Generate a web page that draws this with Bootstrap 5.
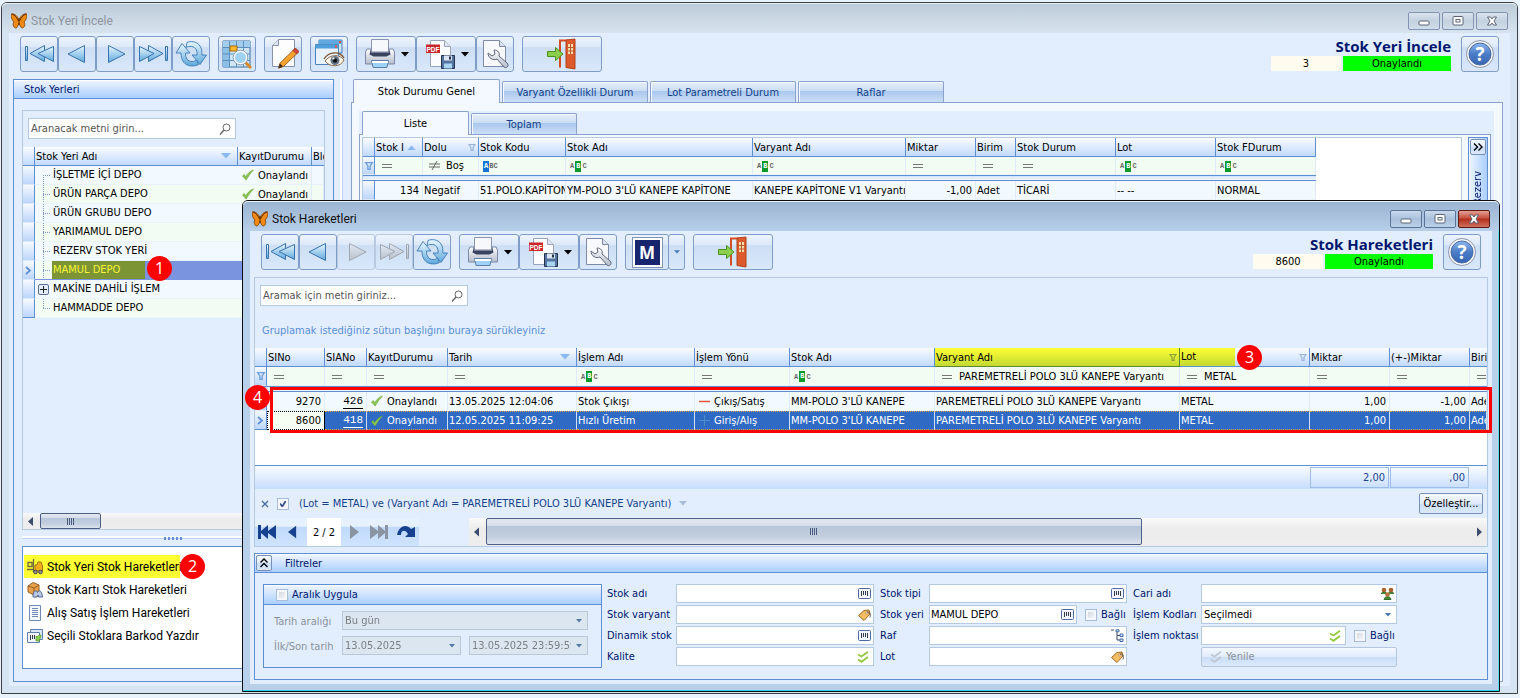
<!DOCTYPE html>
<html lang="tr">
<head>
<meta charset="utf-8">
<meta name="viewport" content="width=device-width, initial-scale=1">
<title>Stok Yeri İncele</title>
<link href="https://cdn.jsdelivr.net/npm/bootstrap@5.3.0/dist/css/bootstrap.min.css" rel="stylesheet">
<style>
:root{--line:#5f8fd2;--soft:#b4c9e3;--face:#e2eefe;--navy:#00156e}
html,body{height:100%}
body{background:#e9f3fd;font:11px/18px "DejaVu Sans Condensed","DejaVu Sans",sans-serif;color:#000;overflow:hidden}
button,input,select{font:inherit;color:inherit}
svg{display:block;flex:none}
.seg{font-family:Roboto,"Noto Sans",sans-serif;font-size:12px}
/* windows */
.win{position:absolute;display:flex;flex-direction:column;border:1px solid #3c4044;border-radius:6px 6px 0 0}
.win-main{inset:2px 2px 4px 1px;background:#d6e4f1}
.win-main>.win-title{background:linear-gradient(#bccad7,#d7e4f0);color:#8f959c}
.win-dlg{inset:200px 20px 6px 242px;border-color:#0b0d10;background:#b8d0e9;box-shadow:inset 0 -1px #28d3e6,inset -1px 0 #5fdcee}
.win-dlg>.win-title{background:linear-gradient(#9ab3d1,#b7cfe8);color:#111}
.win-title{height:30px;padding:7px 9px 0 9px;border-radius:5px 5px 0 0;box-shadow:inset 0 1px #e8f0f8}
.win-title .cap{line-height:23px;padding-left:4px}
.win-title>svg{margin-top:3px}
.win-body{flex:1;min-height:0;display:flex;flex-direction:column;background:var(--face);margin:0 7px 7px}
.winbtn{width:32px;height:18px;border:1px solid #8493b0;border-radius:2px;background:linear-gradient(#dbe4ef,#c3d0de 50%,#cfdcea);padding:0;display:flex;align-items:center;justify-content:center;margin-top:2px}
.win-dlg .winbtn{border-color:#5a7498;background:linear-gradient(#c9d9ec,#a9c0dd 50%,#bcd0e8)}
.win-dlg .winbtn.shut{border-color:#5c1a16;background:linear-gradient(#e3a095,#c8503e 45%,#b22f1c 50%,#d0705c)}
/* toolbar */
.bar{height:46px;padding:3px 11px 0 11px;align-items:flex-start}
.win-dlg .bar{padding:3px 7px 0 7px}
.bar-btn{width:38px;height:36px;padding:0;border:1px solid #7f9cc8;border-radius:3px;display:flex;align-items:center;justify-content:center;background:linear-gradient(#edf4fd,#dce8f8 30%,#cddef4 31%,#d9e8fb)}
.bar-btn.wide{width:60px;justify-content:space-around;padding:0 4px 0 5px}
.bar-btn.exit{width:80px}
.bar-btn.q{margin-left:2px}
.bar-btn:disabled{border-color:#b9c9e0}
.bar-btn:disabled svg{filter:grayscale(1) opacity(.5)}
.screen-name{font:bold 15px/20px "Open Sans","Noto Sans",sans-serif;color:var(--navy);text-align:right}
.tagbox{height:15px;line-height:16px;text-align:center}
.tagbox.id{width:70px;background:#fffbef}
.tagbox.ok{width:108px;background:#0f0}
/* boxes */
.pane{border:1px solid var(--line);display:flex;flex-direction:column}
.pane-head{background:linear-gradient(#f0f6ff,#dceaff 30%,#aacfff);border-bottom:1px solid var(--line);color:var(--navy);height:19px;line-height:19px;box-shadow:inset 0 1px #fff}
.soft{border:1px solid var(--soft)}
.find{width:208px;height:21px;background:#fff;border:1px solid var(--soft);display:flex;align-items:center;padding:0 4px 0 2px;margin:7px 0 0 5px}
.find input,.fld input{flex:1;min-width:0;border:0;outline:0;background:none;padding:0}
.find input::placeholder{color:#555;opacity:1}
/* grids */
.xgrid.table{table-layout:fixed;border-collapse:separate;border-spacing:0;color:#000;margin:0}
.xgrid.table th,.xgrid.table td{height:19px;padding:0 2px 0 1px;line-height:17px;white-space:nowrap;overflow:hidden;font-weight:400;vertical-align:middle;box-shadow:none}
.xgrid.table th{background:linear-gradient(#fafcff,#e6f0ff 35%,#c2dafd);border-bottom:1px solid var(--line);border-right:1px solid var(--line)}
.xgrid.table td{background:#f2faff;border-right:1px solid #dfebfa;border-bottom:1px solid #e9f3fb}
.xgrid.table tr.alt td,.xgrid.table tr.filt td{background:#f3fcf2}
.win-main .xgrid.table tr.filt td{height:18px}
.xgrid.table tbody tr td.ind{background:linear-gradient(#f6faff,#bcd6fb);border-right:1px solid var(--line);border-bottom-color:#dce9fa;padding:0}
.xgrid.table tr.band td{height:6px;line-height:0;background:linear-gradient(#d5e5fb,#f0f6ff);border:solid var(--line);border-width:1px 0;padding:0}
.xgrid.table .num{text-align:right;padding-right:3px}
.xgrid.table .last-ind td.ind{border-bottom-color:var(--line)}
.stat{display:flex;align-items:center;gap:4px;padding-left:3px}
.eq{display:inline-block;width:10px;height:4px;border:solid #777;border-width:1px 0;margin-left:6px;vertical-align:middle}
.abc{display:inline-flex;align-items:center;height:11px;font:bold 7px/10px "Liberation Mono",monospace;color:#666;margin-left:3px;vertical-align:middle}
.abc b{background:#0a9a2c;color:#fff;padding:0 1px;height:11px;line-height:11px;margin:0 1px}
.abc.first b{background:#1173d4;margin:0}
.hl{background:linear-gradient(#feff35,#c3d931)!important;border-color:#5c8a2a!important}
.branch{width:9px;height:18px;margin-left:8px;flex:none;background:repeating-linear-gradient(#8099c4 0 1px,transparent 1px 2px) 0 0/1px 100% no-repeat,repeating-linear-gradient(90deg,#8099c4 0 1px,transparent 1px 2px) 0 9px/8px 1px no-repeat}
.branch.first{background-position:0 9px,0 9px}
.branch.end{background-size:1px 10px,8px 1px}
.plus{width:11px;height:11px;border:1px solid #5c6f93;border-radius:2px;background:#e3ecf8;padding:0;margin:0 3px 0 3px;display:flex;align-items:center;justify-content:center}
.xgrid.table .tree{padding:0;border-right:0}
.tree>div{height:18px;line-height:18px}
.tree span{padding-left:1px}
.xgrid.table tr.cur .tree,.xgrid.table tr.cur td.st{border-bottom-color:#7b94df}
.xgrid.table tr.cur td.st{background:#7b94df}
tr.cur .nm{background:#7b94df;flex:1;display:flex}
.mark-cur{background:#7c9433;color:#f4f53a;width:93px}
.xgrid.table tr.sel td{background:#2f6ac5;color:#fff;border-right-color:#cfe0f6;border-bottom:1px dotted #e0a33c;border-top:1px dotted #e0a33c;line-height:16px}
.xgrid.table tr.sel td.foc{background:#f6fdf2;color:#000;border-color:#000;border-left:1px dotted #000}
.xgrid.table tr.sel td.ind{border-top:0;border-bottom:1px solid var(--line)}
.idlink{font:11px/13px "Liberation Mono",monospace;text-decoration:none;border-bottom:1px solid;color:inherit;display:inline-block;vertical-align:middle}
/* callouts */
.pin{position:absolute;z-index:3;width:25px;height:25px;border-radius:50%;background:#f00;color:#fff;font:16px/25px "Open Sans",sans-serif;text-align:center}
.frame4{position:absolute;z-index:2;left:15px;right:-5px;top:39px;height:46px;border:3px solid #f00;pointer-events:none}
/* tabs */
.xtabs{display:flex;align-items:flex-end;position:relative;z-index:1}
.xtab{border:1px solid #8aa2cc;border-bottom:0;border-radius:2px 2px 0 0;padding:0;color:#15428b;background:linear-gradient(#e6effb,#cadcf2 45%,#a9c8ee 46%,#cbdef6);box-shadow:inset 1px 1px #f5f9fe;height:21px;line-height:21px}
.xtab.on{background:#f4f9ff;color:#000;margin-bottom:-1px;height:24px}
.tabpage{border:1px solid #8aa2cc;background:#f4f9ff}
/* scrollbars */
.sbar{background:linear-gradient(#fafafa,#ececec 40%,#eee);display:flex;align-items:stretch}
.thumb{border:1px solid #4e5f85;border-radius:2px;background:linear-gradient(#e3e8ef,#d5dde9 27%,#b7c6d9 29%,#c3cfdf 70%,#dbe3ee);display:flex;align-items:center;justify-content:center}
.grip{width:8px;height:7px;background:repeating-linear-gradient(90deg,#4b5b7d 0 1px,transparent 1px 2px)}
/* task list */
.task{display:flex;align-items:center;height:23px;color:#000;text-decoration:none;gap:4px;padding-left:3px}
.task.on{background:#ffff33;width:156px;white-space:nowrap}
/* filter form */
.fgrid{display:grid;grid-template-columns:69px 204px 49px 204px 68px 196px;grid-auto-rows:21px;color:var(--navy)}
.fgrid>label{line-height:20px}
.fld{height:19px;border:1px solid var(--soft);background:#fff;display:flex;align-items:center;padding:0 2px 0 1px;color:#000}
.fld.w{width:198px}
.dd{appearance:none;border:1px solid var(--soft);border-radius:0;height:19px;padding:0 16px 0 2px;line-height:17px;background:#fff url("data:image/svg+xml,%3Csvg xmlns='http://www.w3.org/2000/svg' width='6' height='4'%3E%3Cpath d='M0 0h6L3 3.4z' fill='%234a7ab5'/%3E%3C/svg%3E") no-repeat right 5px center}
.dd:disabled{background-color:#d9e6f5;color:#7b8086;opacity:1;filter:saturate(.75)}
.ck{appearance:none;width:12px;height:12px;border:1px solid #a9bddb;background:linear-gradient(135deg,#c9ced8,#fff);margin:0;box-shadow:inset 0 0 0 2px #f4f8fd;flex:none}
.ck:checked{background:url("data:image/svg+xml,%3Csvg xmlns='http://www.w3.org/2000/svg' width='10' height='10'%3E%3Cpath d='M2 4.5l2.3 3L8 1.5' fill='none' stroke='%23344f86' stroke-width='1.7'/%3E%3C/svg%3E") #eef3fa}
.smallbtn{border:1px solid #7690ba;border-radius:2px;padding:0;background:linear-gradient(#f5f9ff,#dfeafa 50%,#cbdef7 51%,#dbe9fb)}
.plainbtn{border:0;background:none;padding:0;display:flex;align-items:center}
.sum{width:79px;height:21px;border:1px solid #9dbce6;margin:1px 1px 0 0;text-align:right;padding-right:3px;line-height:20px;color:#1d4593}
.sum-gap{width:1055px;flex:0 1 auto}
.vtext{writing-mode:vertical-rl;transform:rotate(180deg)}
</style>
</head>
<body>
<svg width="0" height="0" class="position-absolute" aria-hidden="true">
<defs>
<linearGradient id="gb" x1="0" y1="0" x2="0" y2="1"><stop offset="0" stop-color="#e8f7ff"/><stop offset="1" stop-color="#5fa9dc"/></linearGradient>
<linearGradient id="gq" x1="0" y1="0" x2="0" y2="1"><stop offset="0" stop-color="#8db9ee"/><stop offset=".5" stop-color="#4a7cc6"/><stop offset="1" stop-color="#3767b4"/></linearGradient>
<linearGradient id="gg" x1="0" y1="0" x2="0" y2="1"><stop offset="0" stop-color="#fdfdfe"/><stop offset="1" stop-color="#b4bccb"/></linearGradient>
<symbol id="first" viewBox="0 0 32 32"><g fill="url(#gb)" stroke="#3a72ae"><path d="M2.500 8.500h2v14h-2z"/><path d="M21.500 7.500v16L7 15.500z"/><path d="M30.500 8.500v15L15 15.500z"/></g></symbol>
<symbol id="prev" viewBox="0 0 32 32"><path d="M23.500 7.500v17L7 16z" fill="url(#gb)" stroke="#3a72ae"/></symbol>
<symbol id="next" viewBox="0 0 32 32"><path d="M9.500 7.500v17L26 16z" fill="url(#gb)" stroke="#3a72ae"/></symbol>
<symbol id="last" viewBox="0 0 32 32"><g fill="url(#gb)" stroke="#3a72ae"><path d="M28.500 8.500h2v14h-2z"/><path d="M11.500 7.500v16L26 15.500z"/><path d="M2.500 8.500v15L17 15.500z"/></g></symbol>
<symbol id="refresh" viewBox="0 0 32 32"><g fill="url(#gb)" stroke="#3a78b4" stroke-width=".9"><path d="M12 4.500C15 3 22 3 25 8c2 3 2 6 1.800 9h4.700L25 26.500 17 17h5c.500-5-2-9-7-8.500-2 0-3 .500-4 1z"/><path d="M7 5.500L15 15h-4.500c0 5 2 8.500 6.500 8.500 2 0 3-.500 4.500-1.500l2 4.500C20 28.500 12 29 8.500 24c-2-3-2.500-6-2.500-9H1z"/></g></symbol>
<symbol id="gridfind" viewBox="0 0 32 32"><path d="M2 3h27v26H2z" fill="#cfe6f7" stroke="#3f6f9f"/><path d="M2 3h27v6H2z" fill="#a3cdec"/><path d="M2 9h6v20H2z" fill="#8cbfe4"/><path d="M2 9.500h27M2 16h27M2 22.500h27M8.500 3v26M15.500 3v26M22.500 3v26" stroke="#5c8fbc"/><path d="M9 8h7v5H9z" fill="#ffb82e" stroke="#a86b00"/><path d="M24 24l6 6" stroke="#d98a2b" stroke-width="3"/><circle cx="19.500" cy="19.500" r="6.500" fill="#9fd2f3" stroke="#fff" stroke-width="2"/><circle cx="19.500" cy="19.500" r="7.300" fill="none" stroke="#6c84a2" stroke-width=".8"/></symbol>
<symbol id="edit" viewBox="0 0 32 32"><path d="M11.500 1.500h16v27h-22v-21z" fill="#fdfdfe" stroke="#8893ab"/><path d="M11.500 1.500v6h-6" fill="#dfe4ee" stroke="#8893ab"/><path d="M28 10.500l3.500 3.500L16.500 28.500l-5 1.700 1.500-5z" fill="#f5a32c" stroke="#8a4a12" stroke-width=".8"/><path d="M28.500 10l3.500 3.500-2.500 2.500-3.500-3.500z" fill="#d7443a" stroke="#8a2a1a" stroke-width=".6"/><path d="M13 25.500l3 3-4.500 1.700z" fill="#3a2a1a"/></symbol>
<symbol id="view" viewBox="0 0 32 32"><path d="M6 2h23v13H6z" fill="#cfe3f6" stroke="#4380b8"/><path d="M6 2h23v4H6z" fill="#5fa8e0"/><path d="M2.500 6.500h23v20h-23z" fill="#e8f2fc" stroke="#4d83ba"/><path d="M2.500 6.500h23v4h-23z" fill="#4f9fdc"/><path d="M22 7.500h2v2h-2zM26 3h2v2h-2z" fill="#e8503a"/><path d="M12 23c5-7 15-7 19-1-3 7-14 8-19 1z" fill="#fdf6ec" stroke="#8c6a4d"/><circle cx="22" cy="22.500" r="4.500" fill="#64758c"/><circle cx="22" cy="22.500" r="2.200" fill="#111"/><circle cx="20.500" cy="20.500" r="1.100" fill="#fff"/><path d="M11 21c5-8 16-8 20-1" fill="none" stroke="#7b5436" stroke-width="1.400"/></symbol>
<symbol id="print" viewBox="0 0 32 32"><path d="M7.500 1.500h17v13h-17z" fill="#f7f8fc" stroke="#8a93ad"/><path d="M3 11h4v3h18v-3h4l1.500 3v12h-29V14z" fill="url(#gg)" stroke="#7c89a8"/><path d="M7 11l-1.500 5.500 4 2h13l4-2L25 11v3.500H7z" fill="#39435e"/><path d="M7.500 22.500h17l-1.500 7h-14z" fill="#9ed2f5" stroke="#5f7fa6"/><path d="M8 23h16v2H8z" fill="#fff"/></symbol>
<symbol id="pdf" viewBox="0 0 32 32"><path d="M6.500 2.500h14l6 6v20h-20z" fill="#fbfcfe" stroke="#9aa3b8"/><path d="M20.500 2.500v6h6" fill="#dfe5f0" stroke="#9aa3b8"/><path d="M2 6.500h14v8.500H2z" fill="#c9262b"/><text x="9" y="13.500" font-size="6.500" font-weight="bold" text-anchor="middle" fill="#fff" font-family="Liberation Sans,sans-serif">PDF</text><path d="M17.500 17.500h13v13h-13z" fill="#56749f" stroke="#23344f"/><path d="M20 17.500h8v5h-8z" fill="#dce5f1"/><path d="M25 18.500h2v3h-2z" fill="#23344f"/><path d="M20 25.500h8v5h-8z" fill="#a9d4f2"/></symbol>
<symbol id="wrench" viewBox="0 0 32 32"><path d="M4.500 2.500h16l6 6v20h-22z" fill="#f8f9fc" stroke="#7f8ba6"/><path d="M20.500 2.500v6h6" fill="#dbe2ee" stroke="#7f8ba6"/><path d="M9 15l4 3 3-2-1-4c4 0 6 3 5 6l8 7c3 3-1 6-3 4l-7-8c-4 2-9-1-9-6z" fill="url(#gg)" stroke="#5d6578"/></symbol>
<symbol id="exit" viewBox="0 0 32 32"><path d="M14 29.500V2.500h7" fill="none" stroke="#d04e25" stroke-width="2"/><path d="M20 2l9-1v30l-9-1.500z" fill="#dc5a2b" stroke="#b0421b"/><path d="M22 6h5v10h-5z" fill="#f6dda9"/><path d="M24.500 6v10M22 9.500h5M22 13h5" stroke="#b9592c"/><path d="M1.500 13.500h8v-4L17 16l-7.500 6.500v-4h-8z" fill="#8ccf4d" stroke="#4b8f20"/></symbol>
<symbol id="help" viewBox="0 0 32 32"><circle cx="16" cy="16" r="13.500" fill="#f6f8fb" stroke="#8c95aa"/><circle cx="16" cy="16" r="11" fill="url(#gq)" stroke="#4a68a0"/><text x="16" y="23" font-size="19" font-weight="bold" text-anchor="middle" fill="#fff" font-family="Open Sans,sans-serif">?</text></symbol>
<symbol id="fly" viewBox="0 0 16 16"><path d="M0 1c4-1 7 3 8 6 1-3 4-7 8-6 0 4-1 6-3 8 2 3 0 6-2 6-1 0-2-2-3-5-1 3-2 5-3 5-2 0-4-3-2-6C1 7 0 5 0 1z" fill="#f08a12" stroke="#7a3d08" stroke-width=".8"/><path d="M1 1c3 1 5 4 6.500 7M15 1c-3 1-5 4-6.500 7M8 5v7" stroke="#5b2c05" fill="none"/></symbol>
<symbol id="wmin" viewBox="0 0 12 10"><rect x="1" y="5" width="10" height="4" rx="1" fill="#fff" stroke="#5d6477"/></symbol>
<symbol id="wmax" viewBox="0 0 12 10"><rect x="1" y=".5" width="10" height="8.500" rx="1" fill="#fff" stroke="#5d6477"/><rect x="4" y="3.500" width="4" height="2.500" fill="#fff" stroke="#5d6477"/></symbol>
<symbol id="wx" viewBox="0 0 12 10"><path d="M1.500 1h3L6 3 7.500 1h3L8 5l2.500 4h-3L6 7 4.500 9h-3L4 5z" fill="#fff" stroke="#5d6477"/></symbol>
<symbol id="mag" viewBox="0 0 12 12"><circle cx="7.500" cy="4.500" r="3.500" fill="none" stroke="#666"/><path d="M5 7L1 11.500" stroke="#666" stroke-width="1.400"/></symbol>
<symbol id="tick" viewBox="0 0 13 12"><path d="M.500 7L2.500 5.500 4 8C6 4.500 9 1.500 12.500.500 9 4 6.500 8 4.500 11.500z" fill="#8cc653" stroke="#6aa838" stroke-width=".7"/></symbol>
<symbol id="down" viewBox="0 0 10 6"><path d="M0 0h10L5 5.500z"/></symbol>
<symbol id="up" viewBox="0 0 10 6"><path d="M0 6h10L5 .500z"/></symbol>
<symbol id="funnel" viewBox="0 0 8 9"><path d="M1 1.500h6L5 4.500v3H3v-3z" fill="none" stroke="currentColor" stroke-width="1.200"/></symbol>
<symbol id="barc" viewBox="0 0 13 11"><rect x=".5" y=".5" width="12" height="10" rx="1" fill="#f2f6fc" stroke="#4e6aa6"/><path d="M3.500 3v5M5.500 3v4M7.500 3v4M9.500 3v5" stroke="#333a4d"/></symbol>
<symbol id="tag" viewBox="0 0 13 12"><path d="M.500 6.500L6 1.500l5-.500 1 4-6 6.500z" fill="#f6bd62" stroke="#a0682a"/><circle cx="9" cy="4" r="1.200" fill="#fff" stroke="#a0682a" stroke-width=".6"/><path d="M9 3c4 0 3.500 3 3 5.500" stroke="#555" fill="none"/></symbol>
<symbol id="dbl" viewBox="0 0 12 12"><path d="M1 3.500L4.500 5.500 11 .800M1 8.500l3.500 2.300L11 6" fill="none" stroke="currentColor" stroke-width="1.800"/></symbol>
<symbol id="tree" viewBox="0 0 13 13"><path d="M0 1h3M6 3v8h3M6 6.500h3" stroke="#3b4a68" fill="none"/><path d="M5 .800h3v2H5zM9 5h3v2.500H9zM9 10h3v2.500H9z" fill="#dfe8f5" stroke="#3f69ab"/></symbol>
<symbol id="ppl" viewBox="0 0 13 13"><path d="M0 7c1-3 5-3 6 0M7 7c1-3 5-3 6 0M3 12.500c1-4 6-4 7 0z" fill="#3d8f35" stroke="#2c6b27"/><circle cx="3" cy="3" r="2.300" fill="#a8622d"/><circle cx="10" cy="3" r="2.300" fill="#a8622d"/><circle cx="6.500" cy="7.500" r="2.300" fill="#b77339"/></symbol>
<symbol id="nfirst" viewBox="0 0 19 14"><path d="M0 0h3v6l7-6v6l8-6v14l-8-6v6L3 8v6H0z"/></symbol>
<symbol id="nprev" viewBox="0 0 10 14"><path d="M9 0v14L0 7z"/></symbol>
<symbol id="redo" viewBox="0 0 19 12"><path d="M0 9C2-1 10-2 14 3l4-2v10H8l3-3C8 3 4 4 4 9z"/></symbol>
<symbol id="fork" viewBox="0 0 16 16"><path d="M6.500 0v13M1 3.500h4v4H1zM0 10.500h6" fill="none" stroke="#6f6a3c" stroke-width="1.300"/><path d="M8 6h2l1-3h3l1.500 4v5H8z" fill="#f2ae1c" stroke="#a56e0c"/><circle cx="8.500" cy="13" r="1.800" fill="#999" stroke="#444"/><circle cx="13.500" cy="13" r="1.800" fill="#999" stroke="#444"/></symbol>
<symbol id="boxes" viewBox="0 0 16 16"><path d="M1 4l5-3.500L12 3v6l-5 4-6-3z" fill="#e9a24c" stroke="#9a5f1f"/><path d="M1 4l6 2 5-3M7 6v7" stroke="#9a5f1f" fill="none"/><path d="M6 15c0-6 3-8 4.500-4.500C12 7 15 9 15.500 15h-4l-.500-2-1 2z" fill="#b9c9e2" stroke="#4a6290"/></symbol>
<symbol id="doc" viewBox="0 0 16 16"><path d="M2.500.500h11v15h-11z" fill="#f4f8fd" stroke="#6f88b4"/><path d="M5 3.500h6M5 5.500h6M5 7.500h6M5 9.500h6M5 11.500h6" stroke="#6f88b4"/></symbol>
<symbol id="bprint" viewBox="0 0 16 16"><path d="M3.500 1.500h12v10h-12z" fill="#d8e6f5" stroke="#5f7eb2"/><path d="M.500 4.500h12v10H.500z" fill="#f2f6fc" stroke="#5f7eb2"/><path d="M3.500 7v5M5.500 7v4M7.500 7v4" stroke="#333a4d"/><path d="M14 7c-2 0-3 .500-4 2l-1-1v5h4l-1-1c1-1 2-2 2-5z" fill="#8ccf4d" stroke="#4b8f20" stroke-width=".6"/></symbol>
</defs>
</svg>

<section class="win win-main">
  <header class="win-title d-flex">
    <svg width="16" height="16"><use href="#fly"/></svg><span class="cap seg me-auto">Stok Yeri İncele</span>
    <div class="d-flex" style="gap:2px">
      <button class="winbtn" aria-label="Küçült"><svg width="12" height="10"><use href="#wmin"/></svg></button>
      <button class="winbtn" aria-label="Büyüt"><svg width="12" height="10"><use href="#wmax"/></svg></button>
      <button class="winbtn" aria-label="Kapat"><svg width="12" height="10"><use href="#wx"/></svg></button>
    </div>
  </header>
  <div class="win-body">
    <div class="bar d-flex gap-2">
      <div class="d-flex">
        <button class="bar-btn" aria-label="İlk"><svg width="32" height="32"><use href="#first"/></svg></button>
        <button class="bar-btn" aria-label="Önceki"><svg width="32" height="32"><use href="#prev"/></svg></button>
        <button class="bar-btn" aria-label="Sonraki"><svg width="32" height="32"><use href="#next"/></svg></button>
        <button class="bar-btn" aria-label="Son"><svg width="32" height="32"><use href="#last"/></svg></button>
        <button class="bar-btn" aria-label="Yenile"><svg width="32" height="32"><use href="#refresh"/></svg></button>
      </div>
      <button class="bar-btn" aria-label="Liste"><svg width="32" height="32"><use href="#gridfind"/></svg></button>
      <button class="bar-btn" aria-label="Düzenle"><svg width="32" height="32"><use href="#edit"/></svg></button>
      <button class="bar-btn" aria-label="Göster"><svg width="32" height="32"><use href="#view"/></svg></button>
      <div class="d-flex">
        <button class="bar-btn wide" aria-label="Yazdır"><svg width="32" height="32"><use href="#print"/></svg><svg width="8" height="5"><use href="#down"/></svg></button>
        <button class="bar-btn wide" aria-label="PDF"><svg width="32" height="32"><use href="#pdf"/></svg><svg width="8" height="5"><use href="#down"/></svg></button>
        <button class="bar-btn" aria-label="Ayarlar"><svg width="32" height="32"><use href="#wrench"/></svg></button>
      </div>
      <button class="bar-btn exit" aria-label="Çıkış"><svg width="32" height="32"><use href="#exit"/></svg></button>
      <div class="ms-auto me-0">
        <div class="screen-name">Stok Yeri İncele</div>
        <div class="d-flex" style="gap:2px"><div class="tagbox id">3</div><div class="tagbox ok">Onaylandı</div></div>
      </div>
      <button class="bar-btn q" aria-label="Yardım"><svg width="32" height="32"><use href="#help"/></svg></button>
    </div>

    <div class="d-flex flex-fill ms-1 mb-1" style="min-height:0;padding-right:7px">
      <aside class="pane" style="flex:0 0 321px">
        <div class="pane-head" style="padding-left:10px">Stok Yerleri</div>
        <div class="soft d-flex flex-column flex-fill mx-2" style="margin-top:11px;min-height:0">
          <label class="find mb-2"><input type="text" placeholder="Aranacak metni girin..." aria-label="Ara"><svg width="12" height="12"><use href="#mag"/></svg></label>
          <div class="overflow-hidden flex-fill">
          <table class="table xgrid">
            <colgroup><col style="width:12px"><col style="width:203px"><col style="width:74px"><col></colgroup>
            <thead><tr><th></th><th><div class="d-flex align-items-center justify-content-between pe-1">Stok Yeri Adı<svg width="10" height="6" fill="#8ab8f2"><use href="#down"/></svg></div></th><th>KayıtDurumu</th><th class="border-end-0">Blo</th></tr></thead>
            <tbody>
            <tr><td class="ind"></td><td class="tree"><div class="d-flex"><i class="branch first"></i><span>İŞLETME İÇİ DEPO</span></div></td><td class="st"><div class="stat"><svg width="12" height="12"><use href="#tick"/></svg>Onaylandı</div></td><td></td></tr>
            <tr class="alt"><td class="ind"></td><td class="tree"><div class="d-flex"><i class="branch"></i><span>ÜRÜN PARÇA DEPO</span></div></td><td class="st"><div class="stat"><svg width="12" height="12"><use href="#tick"/></svg>Onaylandı</div></td><td></td></tr>
            <tr><td class="ind"></td><td class="tree"><div class="d-flex"><i class="branch"></i><span>ÜRÜN GRUBU DEPO</span></div></td><td class="st"></td><td></td></tr>
            <tr class="alt"><td class="ind"></td><td class="tree"><div class="d-flex"><i class="branch"></i><span>YARIMAMUL DEPO</span></div></td><td class="st"></td><td></td></tr>
            <tr><td class="ind"></td><td class="tree"><div class="d-flex"><i class="branch"></i><span>REZERV STOK YERİ</span></div></td><td class="st"></td><td></td></tr>
            <tr class="cur alt"><td class="ind"><svg width="10" height="9" viewBox="0 0 10 9"><path d="M3 1l4 3.500L3 8" fill="none" stroke="#5b8fdc" stroke-width="1.700"/></svg></td><td class="tree"><div class="d-flex"><i class="branch"></i><div class="nm"><span class="mark-cur">MAMUL DEPO</span></div></div></td><td class="st"></td><td></td></tr>
            <tr><td class="ind"></td><td class="tree"><div class="d-flex align-items-center"><button class="plus" aria-label="Aç"><svg width="7" height="7" viewBox="0 0 7 7"><path d="M0 3.500h7M3.500 0v7" stroke="#222"/></svg></button><span>MAKİNE DAHİLİ İŞLEM</span></div></td><td class="st"></td><td></td></tr>
            <tr class="alt last-ind"><td class="ind"></td><td class="tree"><div class="d-flex"><i class="branch end"></i><span>HAMMADDE DEPO</span></div></td><td class="st"></td><td></td></tr>
            </tbody>
          </table>
          </div>
          <div class="sbar" style="height:16px"><svg class="mx-1 my-auto" width="6" height="9" viewBox="0 0 6 9"><path d="M6 0v9L1 4.500z" fill="#3d4b6d"/></svg><div class="thumb" style="width:61px;margin-left:3px"><i class="grip"></i></div></div>
        </div>
        <div class="d-flex align-items-center justify-content-center mx-2" style="height:16px;background:linear-gradient(transparent 6px,#fff 6px 8px,#bcd5f7 8px 9px,transparent 9px)"><i style="width:20px;height:3px;background:repeating-linear-gradient(100deg,#5f8fd2 0 2px,transparent 2px 4px)"></i></div>
        <nav class="pane bg-white seg mx-2" style="height:123px;margin-bottom:12px;padding:8px 0 0 1px">
          <a class="task on position-relative" href="#"><svg width="16" height="16"><use href="#fork"/></svg>Stok Yeri Stok Hareketleri<span class="pin" style="left:156px;top:-1px">2</span></a>
          <a class="task" href="#"><svg width="16" height="16"><use href="#boxes"/></svg>Stok Kartı Stok Hareketleri</a>
          <a class="task" href="#"><svg width="16" height="16"><use href="#doc"/></svg>Alış Satış İşlem Hareketleri</a>
          <a class="task" href="#"><svg width="16" height="16"><use href="#bprint"/></svg>Seçili Stoklara Barkod Yazdır</a>
        </nav>
      </aside>
      <div style="flex:0 0 17px;background:linear-gradient(90deg,transparent 6px,#fff 6px 8px,#bcd5f7 8px 9px,transparent 9px)"></div>
      <main class="d-flex flex-column flex-fill" style="min-width:0">
        <div class="xtabs" style="gap:2px;padding-left:2px">
          <button class="xtab on" style="width:147px">Stok Durumu Genel</button>
          <button class="xtab" style="width:146px">Varyant Özellikli Durum</button>
          <button class="xtab" style="width:146px">Lot Parametreli Durum</button>
          <button class="xtab" style="width:146px">Raflar</button>
        </div>
        <div class="tabpage flex-fill" style="min-height:0;padding:8px 8px 8px 7px">
          <div class="d-flex flex-column h-100" style="background:var(--face)">
            <div class="xtabs" style="gap:2px;padding-left:3px">
              <button class="xtab on" style="width:107px">Liste</button>
              <button class="xtab" style="width:106px">Toplam</button>
            </div>
            <div class="tabpage flex-fill d-flex" style="padding:2px;margin-right:3px;gap:6px">
              <div class="soft bg-white flex-fill">
                <table class="table xgrid" style="width:953px">
                  <colgroup><col style="width:12px"><col style="width:48px"><col style="width:56px"><col style="width:87px"><col style="width:187px"><col style="width:153px"><col style="width:70px"><col style="width:40px"><col style="width:100px"><col style="width:100px"><col style="width:100px"></colgroup>
                  <thead><tr><th></th><th><div class="d-flex align-items-center justify-content-between pe-1">Stok I<svg width="9" height="5" fill="#8ab8f2"><use href="#up"/></svg></div></th><th><div class="d-flex align-items-center justify-content-between">Dolu<svg width="8" height="9" style="color:#9bb4dc"><use href="#funnel"/></svg></div></th><th>Stok Kodu</th><th>Stok Adı</th><th>Varyant Adı</th><th>Miktar</th><th>Birim</th><th>Stok Durum</th><th>Lot</th><th>Stok FDurum</th></tr></thead>
                  <tbody>
                  <tr class="filt"><td class="ind"><svg width="10" height="10" class="m-auto" style="color:#6d9ce0"><use href="#funnel"/></svg></td><td><i class="eq"></i></td><td><div class="d-flex align-items-center justify-content-end" style="gap:6px;padding-right:12px"><svg width="11" height="9" viewBox="0 0 11 9"><path d="M0 3h11M0 6h11M8 0L3 9" stroke="#666" fill="none"/></svg>Boş</div></td><td><span class="abc first"><b>A</b>BC</span></td><td><span class="abc">A<b>B</b>C</span></td><td><span class="abc">A<b>B</b>C</span></td><td><i class="eq"></i></td><td><i class="eq"></i></td><td><i class="eq"></i></td><td><span class="abc">A<b>B</b>C</span></td><td><span class="abc">A<b>B</b>C</span></td></tr>
                  <tr class="band"><td colspan="11"></td></tr>
                  <tr><td class="ind"></td><td class="num">134</td><td>Negatif</td><td>51.POLO.KAPİTONE</td><td>YM-POLO 3'LÜ KANEPE KAPİTONE</td><td>KANEPE KAPİTONE V1 Varyantı</td><td class="num">-1,00</td><td>Adet</td><td>TİCARİ</td><td>-- --</td><td>NORMAL</td></tr>
                  </tbody>
                </table>
              </div>
              <div class="pane align-items-center" style="width:20px;background:linear-gradient(90deg,#edf5ff,#aacfff);color:var(--navy);padding-top:1px">
                <button class="smallbtn" style="width:16px;height:16px" aria-label="Genişlet"><svg width="14" height="14" viewBox="0 0 14 14"><path d="M3 3.500L6.500 7 3 10.500M7.500 3.500L11 7l-3.500 3.500" fill="none" stroke="#000" stroke-width="1.400"/></svg></button>
                <span class="vtext mt-3">Rezerv</span>
              </div>
            </div>
          </div>
        </div>
      </main>
    </div>
  </div>
</section>
<span class="pin" style="left:147px;top:256px">1</span>

<section class="win win-dlg">
  <header class="win-title d-flex">
    <svg width="16" height="16"><use href="#fly"/></svg><span class="cap seg me-auto">Stok Hareketleri</span>
    <div class="d-flex" style="gap:2px">
      <button class="winbtn" aria-label="Küçült"><svg width="12" height="10"><use href="#wmin"/></svg></button>
      <button class="winbtn" aria-label="Büyüt"><svg width="12" height="10"><use href="#wmax"/></svg></button>
      <button class="winbtn shut" aria-label="Kapat"><svg width="12" height="10"><use href="#wx"/></svg></button>
    </div>
  </header>
  <div class="win-body px-1 pb-1">
    <div class="bar d-flex gap-2">
      <div class="d-flex">
        <button class="bar-btn" aria-label="İlk"><svg width="32" height="32"><use href="#first"/></svg></button>
        <button class="bar-btn" aria-label="Önceki"><svg width="32" height="32"><use href="#prev"/></svg></button>
        <button class="bar-btn" disabled aria-label="Sonraki"><svg width="32" height="32"><use href="#next"/></svg></button>
        <button class="bar-btn" disabled aria-label="Son"><svg width="32" height="32"><use href="#last"/></svg></button>
        <button class="bar-btn" aria-label="Yenile"><svg width="32" height="32"><use href="#refresh"/></svg></button>
      </div>
      <div class="d-flex">
        <button class="bar-btn wide" aria-label="Yazdır"><svg width="32" height="32"><use href="#print"/></svg><svg width="8" height="5"><use href="#down"/></svg></button>
        <button class="bar-btn wide" aria-label="PDF"><svg width="32" height="32"><use href="#pdf"/></svg><svg width="8" height="5"><use href="#down"/></svg></button>
        <button class="bar-btn" aria-label="Ayarlar"><svg width="32" height="32"><use href="#wrench"/></svg></button>
      </div>
      <div class="d-flex">
        <button class="bar-btn" style="width:44px"><span style="width:29px;height:29px;border:2px solid #fff;outline:1px solid #8094b5;background:#17256e;color:#fff;font:bold 17px/25px 'Open Sans',sans-serif">M</span></button>
        <button class="bar-btn" style="width:17px;margin-left:-1px" aria-label="Seçenekler"><svg width="6" height="4" fill="#4a7ab5"><use href="#down"/></svg></button>
      </div>
      <button class="bar-btn exit" aria-label="Çıkış"><svg width="32" height="32"><use href="#exit"/></svg></button>
      <div class="ms-auto">
        <div class="screen-name">Stok Hareketleri</div>
        <div class="d-flex" style="gap:2px"><div class="tagbox id">8600</div><div class="tagbox ok">Onaylandı</div></div>
      </div>
      <button class="bar-btn q" aria-label="Yardım"><svg width="32" height="32"><use href="#help"/></svg></button>
    </div>

    <div class="soft d-flex flex-column flex-fill" style="min-height:0;margin-bottom:6px">
      <label class="find"><input type="text" placeholder="Aramak için metin giriniz..." aria-label="Ara"><svg width="12" height="12"><use href="#mag"/></svg></label>
      <div class="d-flex align-items-center" style="height:42px;padding:8px 0 0 7px;color:#5b8fd6">Gruplamak istediğiniz sütun başlığını buraya sürükleyiniz</div>
      <div class="position-relative flex-fill bg-white">
        <div class="overflow-hidden">
        <table class="table xgrid">
          <colgroup><col style="width:12px"><col style="width:58px"><col style="width:42px"><col style="width:81px"><col style="width:129px"><col style="width:118px"><col style="width:95px"><col style="width:145px"><col style="width:245px"><col style="width:130px"><col style="width:80px"><col style="width:80px"><col></colgroup>
          <thead><tr><th></th><th>SINo</th><th>SIANo</th><th>KayıtDurumu</th><th><div class="d-flex align-items-center justify-content-between pe-1">Tarih<svg width="10" height="6" fill="#8ab8f2"><use href="#down"/></svg></div></th><th>İşlem Adı</th><th>İşlem Yönü</th><th>Stok Adı</th><th class="hl"><div class="d-flex align-items-center justify-content-between">Varyant Adı<svg width="8" height="9" style="color:#8aa23a"><use href="#funnel"/></svg></div></th><th class="ps-0"><div class="d-flex align-items-center justify-content-between"><span class="hl" style="width:55px;height:18px;padding-left:1px">Lot</span><svg width="8" height="9" style="color:#9bb4dc"><use href="#funnel"/></svg></div></th><th>Miktar</th><th>(+-)Miktar</th><th class="border-end-0">Birim</th></tr></thead>
          <tbody>
          <tr class="filt"><td class="ind"><svg width="10" height="10" class="m-auto" style="color:#6d9ce0"><use href="#funnel"/></svg></td><td><i class="eq"></i></td><td><i class="eq"></i></td><td><i class="eq"></i></td><td><i class="eq"></i></td><td><span class="abc">A<b>B</b>C</span></td><td><i class="eq"></i></td><td><span class="abc">A<b>B</b>C</span></td><td><i class="eq" style="margin-right:7px"></i>PAREMETRELİ POLO 3LÜ KANEPE Varyantı</td><td><i class="eq" style="margin-right:7px"></i>METAL</td><td><i class="eq"></i></td><td><i class="eq"></i></td><td><i class="eq"></i></td></tr>
          <tr class="band"><td colspan="13"></td></tr>
          <tr><td class="ind"></td><td class="num">9270</td><td class="num"><a class="idlink" href="#">426</a></td><td><div class="stat"><svg width="12" height="12"><use href="#tick"/></svg>Onaylandı</div></td><td>13.05.2025 12:04:06</td><td>Stok Çıkışı</td><td><div class="stat"><svg width="11" height="11" viewBox="0 0 11 11"><path d="M0 5.500h11" stroke="#e0553c" stroke-width="1.500"/></svg>Çıkış/Satış</div></td><td>MM-POLO 3'LÜ KANEPE</td><td>PAREMETRELİ POLO 3LÜ KANEPE Varyantı</td><td>METAL</td><td class="num">1,00</td><td class="num">-1,00</td><td>Adet</td></tr>
          <tr class="sel"><td class="ind"><svg width="10" height="9" viewBox="0 0 10 9"><path d="M3 1l4 3.500L3 8" fill="none" stroke="#5b8fdc" stroke-width="1.700"/></svg></td><td class="num foc">8600</td><td class="num"><a class="idlink" href="#">418</a></td><td><div class="stat"><svg width="12" height="12"><use href="#tick"/></svg>Onaylandı</div></td><td>12.05.2025 11:09:25</td><td>Hızlı Üretim</td><td><div class="stat"><svg width="11" height="11" viewBox="0 0 11 11"><path d="M0 5.500h11M5.500 0v11" stroke="#4d8cc9"/></svg>Giriş/Alış</div></td><td>MM-POLO 3'LÜ KANEPE</td><td>PAREMETRELİ POLO 3LÜ KANEPE Varyantı</td><td>METAL</td><td class="num">1,00</td><td class="num">1,00</td><td>Adet</td></tr>
          </tbody>
        </table>
        </div>
        <div class="frame4"></div>
        <span class="pin" style="left:-10px;top:37px">4</span>
        <span class="pin" style="left:982px;top:-3px">3</span>
      </div>
      <div class="d-flex" style="height:24px;border-top:1px solid var(--line);background:linear-gradient(#fafcff,#c6ddfd)"><div class="sum-gap"></div><div class="sum">2,00</div><div class="sum">,00</div></div>
      <div class="d-flex align-items-center" style="height:29px;color:#15428b;padding:0 4px 0 6px">
        <button class="plainbtn" aria-label="Filtreyi kaldır"><svg width="8" height="8" viewBox="0 0 8 8"><path d="M1 1l6 6M7 1L1 7" stroke="#4a6aa5" stroke-width="1.300"/></svg></button>
        <label class="d-flex align-items-center ms-2"><input class="ck" style="margin-right:10px" type="checkbox" checked><span>(Lot = METAL) ve (Varyant Adı = PAREMETRELİ POLO 3LÜ KANEPE Varyantı)</span></label>
        <svg style="margin-left:8px" width="8" height="5" fill="#a9bcd8"><use href="#down"/></svg>
        <button class="smallbtn ms-auto text-black" style="width:64px;height:21px">Özelleştir...</button>
      </div>
      <div class="d-flex" style="height:28px">
        <div class="d-flex align-items-center" style="width:164px;background:linear-gradient(#e6f1ff 30%,#c0dafc 32%,#cfe3fe);color:#123c8c;padding-left:3px">
          <button class="plainbtn" aria-label="İlk kayıt"><svg width="19" height="14" fill="#17418f"><use href="#nfirst"/></svg></button>
          <button class="plainbtn" style="margin-left:11px" aria-label="Önceki kayıt"><svg width="9" height="14" fill="#17418f"><use href="#nprev"/></svg></button>
          <span class="bg-white text-black text-center h-100" style="width:34px;margin:0 9px 0 10px;line-height:29px">2 / 2</span>
          <button class="plainbtn" aria-label="Sonraki kayıt"><svg width="9" height="14" viewBox="0 0 9 14" fill="#8a94a3"><path d="M0 0v14l9-7z"/></svg></button>
          <button class="plainbtn" style="margin-left:11px" aria-label="Son kayıt"><svg width="19" height="14" viewBox="0 0 19 14" fill="#8a94a3"><path d="M18 0h-3v6L8 0v6L0 0v14l8-6v6l7-6v6h3z"/></svg></button>
          <button class="plainbtn" style="margin-left:8px" aria-label="Yinele"><svg width="19" height="12" fill="#17418f"><use href="#redo"/></svg></button>
        </div>
        <div class="sbar flex-fill" style="margin-left:50px;padding-bottom:1px"><svg class="ms-1 my-auto" width="6" height="10" viewBox="0 0 6 9"><path d="M6 0v9L1 4.500z" fill="#3d4b6d"/></svg><div class="thumb" style="width:656px;margin-left:7px"><i class="grip"></i></div><svg class="ms-auto me-1 my-auto" width="6" height="10" viewBox="0 0 6 9"><path d="M0 0v9l5-4.500z" fill="#3d4b6d"/></svg></div>
      </div>
    </div>

    <div class="pane" style="flex:0 0 127px">
      <div class="pane-head d-flex align-items-center"><button class="smallbtn" style="width:16px;height:16px;margin:0 13px 0 1px" aria-label="Daralt"><svg width="14" height="14" viewBox="0 0 14 14"><path d="M3.500 6.500L7 3l3.500 3.500M3.500 11L7 7.500l3.500 3.500" fill="none" stroke="#000" stroke-width="1.400"/></svg></button>Filtreler</div>
      <div class="d-flex" style="padding:11px 8px">
        <fieldset class="pane" style="width:339px;height:84px;margin-right:5px">
          <div class="pane-head" style="height:20px"><label class="d-flex align-items-center"><input type="checkbox" class="ck" style="margin:0 4px 0 12px">Aralık Uygula</label></div>
          <div class="d-grid" style="grid-template-columns:68px 127px 119px;row-gap:3px;padding:6px 10px;color:#8a919a;line-height:22px">
            <label for="rg">Tarih aralığı</label><select id="rg" class="dd" disabled style="grid-column:2/4"><option>Bu gün</option></select>
            <label for="d1">İlk/Son tarih</label><select id="d1" class="dd" disabled style="width:119px"><option>13.05.2025</option></select><select class="dd" disabled aria-label="Son tarih"><option>13.05.2025 23:59:59</option></select>
          </div>
        </fieldset>
        <div class="fgrid">
          <label for="f1">Stok adı</label><div class="fld w"><input id="f1"><svg width="13" height="11"><use href="#barc"/></svg></div>
          <label for="f2">Stok tipi</label><div class="fld w"><input id="f2"><svg width="13" height="11"><use href="#barc"/></svg></div>
          <label for="f3">Cari adı</label><div class="fld"><input id="f3"><svg width="13" height="13"><use href="#ppl"/></svg></div>
          <label for="f4">Stok varyant</label><div class="fld w"><input id="f4"><svg width="13" height="12"><use href="#tag"/></svg></div>
          <label for="f5">Stok yeri</label><div class="d-flex w-100"><div class="fld" style="width:148px"><input id="f5" value="MAMUL DEPO"><svg width="13" height="11"><use href="#barc"/></svg></div><label class="d-flex align-items-center ms-2" style="height:19px"><input type="checkbox" class="ck me-1">Bağlı</label></div>
          <label for="f6">İşlem Kodları</label><select id="f6" class="dd text-black"><option>Seçilmedi</option></select>
          <label for="f7">Dinamik stok</label><div class="fld w"><input id="f7"><svg width="13" height="11"><use href="#barc"/></svg></div>
          <label for="f8">Raf</label><div class="fld w"><input id="f8"><svg width="13" height="13"><use href="#tree"/></svg></div>
          <label for="f9">İşlem noktası</label><div class="d-flex"><div class="fld pe-1" style="width:145px"><input id="f9"><svg width="12" height="12" style="color:#93c83d"><use href="#dbl"/></svg></div><label class="d-flex align-items-center ms-2" style="height:19px"><input type="checkbox" class="ck me-1">Bağlı</label></div>
          <label for="f10">Kalite</label><div class="fld w pe-1"><input id="f10"><svg width="12" height="12" style="color:#93c83d"><use href="#dbl"/></svg></div>
          <label for="f11">Lot</label><div class="fld w"><input id="f11"><svg width="13" height="12"><use href="#tag"/></svg></div>
          <span></span><button class="smallbtn d-flex align-items-center gap-1 ps-2" disabled style="height:20px;border-color:#b4c5de;color:#8a919a"><svg width="12" height="12" style="color:#c0c7d0"><use href="#dbl"/></svg>Yenile</button>
        </div>
      </div>
    </div>
  </div>
</section>
<script src="https://cdn.jsdelivr.net/npm/bootstrap@5.3.0/dist/js/bootstrap.bundle.min.js"></script>
</body>
</html>
